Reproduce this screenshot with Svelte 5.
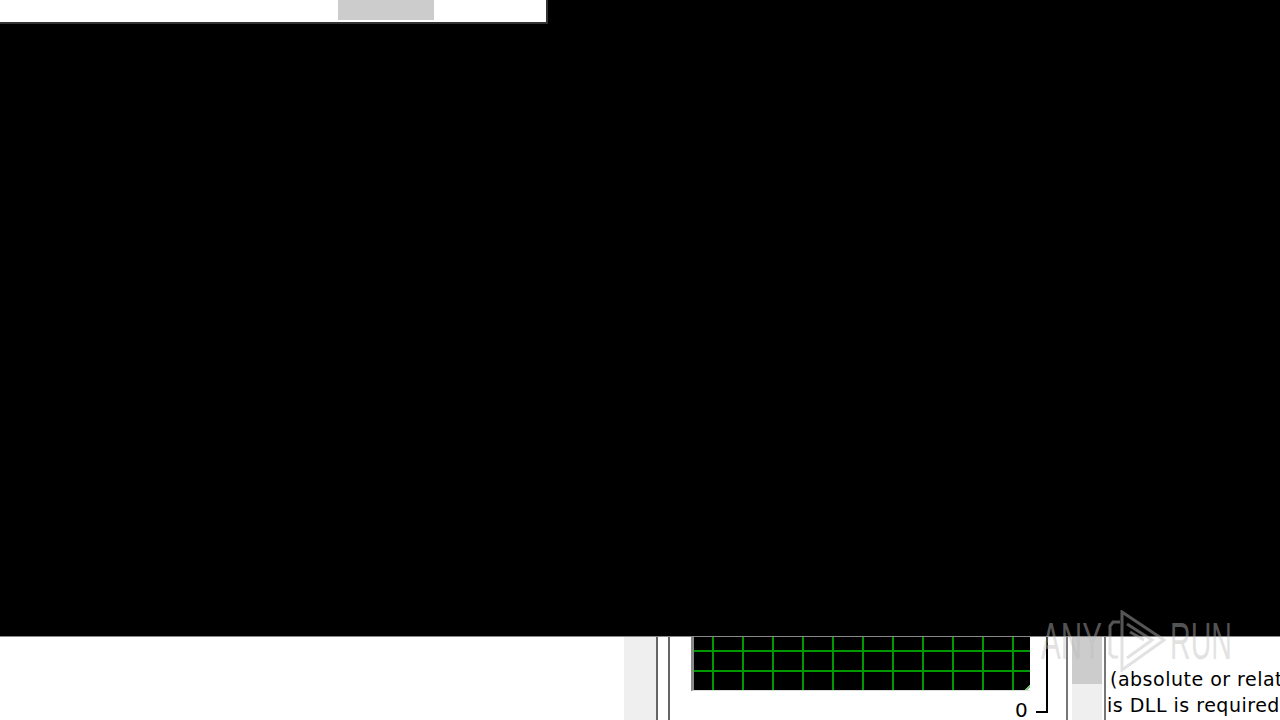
<script lang="ts">
  // remote desktop capture: two windows peeking out around a black screen
  const lines = ['(absolute or relative path)', 'is DLL is required for this'];
</script>

<div class="screen">
  <div class="top-window">
    <div class="thumb"></div>
  </div>

  <div class="black"></div>

  <div class="bottom-window">
    <div class="blank"></div>
    <div class="track"></div>
    <div class="rail"></div>

    <div class="graph-area">
      <div class="graph"></div>
      <div class="zero">0</div>
      <div class="tick"></div>
    </div>

    <div class="side-track">
      <div class="side-inner">
        <div class="side-thumb"></div>
      </div>
    </div>

    <div class="note">
      {#each lines as line, i}
        <div class="note-line" class:second={i === 1}>{line}</div>
      {/each}
    </div>
  </div>

  <div class="watermark">
    <span class="wm-text">ANY</span>
    <svg class="wm-logo" width="60" height="62" viewBox="0 0 60 62" fill="none">
      <path d="M14 12 L7 12 L4 16 L4 44 L7 47 L12 47" />
      <path d="M16 2 L58 30 L16 60 Z" />
      <path d="M21 14 L46 30 L21 48" />
      <path d="M24 22 L38 30" />
    </svg>
    <span class="wm-text run">RUN</span>
  </div>
</div>

<style>
  :global(body) {
    margin: 0;
    background: #000;
  }

  .screen {
    position: relative;
    display: flex;
    flex-direction: column;
    width: 1280px;
    height: 720px;
    overflow: hidden;
    background: #000;
    font-family: "DejaVu Sans", sans-serif;
  }

  .top-window {
    box-sizing: border-box;
    width: 548px;
    height: 24px;
    background: #fff;
    border-right: 2px solid #333;
    border-bottom: 2px solid #333;
    padding-left: 338px;
  }

  .thumb {
    width: 96px;
    height: 20px;
    background: #ccc;
  }

  .black { flex: 1; }

  .bottom-window {
    box-sizing: border-box;
    display: flex;
    height: 84px;
    background: #fff;
    border-top: 1px solid #888;
  }

  .blank { width: 624px; }

  .track {
    width: 32px;
    background: #efefef;
  }

  .rail {
    width: 10px;
    border-left: 2px solid #666;
    border-right: 2px solid #666;
  }

  .graph-area {
    position: relative;
    box-sizing: border-box;
    width: 396px;
    padding-left: 21px;
  }

  .graph {
    position: relative;
    box-sizing: border-box;
    width: 339px;
    height: 54px;
    border-left: 3px solid #888;
    border-bottom: 1px solid #ddd;
    background-color: #000;
    background-image:
      repeating-linear-gradient(to right, transparent 0 18px, #090 18px 20px, transparent 20px 30px),
      repeating-linear-gradient(to bottom, transparent 0 13px, #090 13px 15px, transparent 15px 20px);
  }

  .graph::after {
    content: "";
    position: absolute;
    right: 0;
    bottom: 0;
    width: 5px;
    height: 5px;
    background: linear-gradient(135deg, #000 45%, #7c7 45% 70%, #fff 70%);
  }

  .zero {
    position: absolute;
    left: 345px;
    top: 63px;
    font-size: 20px;
    line-height: 20px;
    color: #000;
  }

  .tick {
    position: absolute;
    left: 366px;
    top: 0;
    width: 10px;
    height: 74px;
    border-right: 2px solid #000;
    border-bottom: 2px solid #000;
  }

  .side-track {
    box-sizing: border-box;
    width: 40px;
    padding: 0 2px 0 4px;
    border-left: 2px solid #777;
    border-right: 2px solid #777;
  }

  .side-inner {
    height: 100%;
    background: #efefef;
  }

  .side-thumb {
    height: 47px;
    background: #ccc;
  }

  .note {
    flex: 1;
    min-width: 0;
    overflow: hidden;
    padding-top: 29px;
    white-space: nowrap;
    font-size: 19px;
    line-height: 26px;
    letter-spacing: 0.5px;
    color: #000;
  }

  .note-line { padding-left: 4px; }
  .note-line.second { padding-left: 1px; }

  .watermark {
    position: absolute;
    left: 1041px;
    top: 610px;
    display: flex;
    align-items: center;
    color: rgba(190, 190, 190, 0.44);
    pointer-events: none;
  }

  .wm-text {
    font-family: "Liberation Sans", sans-serif;
    font-size: 52px;
    line-height: 62px;
    width: 65px;
    transform: scaleX(0.57);
    transform-origin: left center;
  }

  .wm-text.run {
    margin-left: 4px;
    transform: scaleX(0.55);
  }

  .wm-logo {
    stroke: rgba(190, 190, 190, 0.45);
    stroke-width: 3;
  }
</style>
